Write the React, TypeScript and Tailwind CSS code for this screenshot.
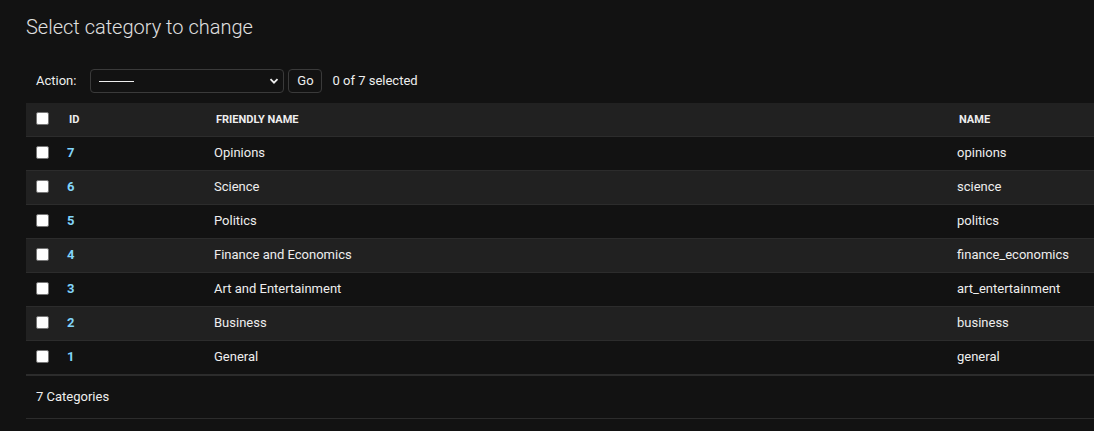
const rows = [
  { id: 7, friendly: 'Opinions', name: 'opinions' },
  { id: 6, friendly: 'Science', name: 'science' },
  { id: 5, friendly: 'Politics', name: 'politics' },
  { id: 4, friendly: 'Finance and Economics', name: 'finance_economics' },
  { id: 3, friendly: 'Art and Entertainment', name: 'art_entertainment' },
  { id: 2, friendly: 'Business', name: 'business' },
  { id: 1, friendly: 'General', name: 'general' },
]

function Checkbox() {
  return <div className="w-[13px] h-[13px] rounded-[2px] bg-white border border-[#767676]" />
}

export default function App() {
  return (
    <div className="min-h-[431px] w-[1094px] overflow-hidden bg-[#121212] text-[#eeeeee] font-['Roboto',sans-serif] pl-[26px]">
      <h1 className="pt-[14px] text-[20px] font-light leading-[26px] text-[#e0e0e0]">
        Select category to change
      </h1>

      <div className="mt-[29px] flex items-center h-[24px] pl-[10px] text-[13px]">
        <span className="text-[#eeeeee]">Action:</span>
        <div className="ml-[14px] w-[194px] h-[24px] rounded-[4px] border border-[#3a3a3a] flex items-center justify-between pl-[8px] pr-[4px]">
          <span className="block w-[35px] h-[1px] bg-[#eeeeee]" />
          <svg width="10" height="10" viewBox="0 0 10 10" className="text-[#eeeeee]">
            <path d="M1.5 3.2 L5 6.7 L8.5 3.2" fill="none" stroke="currentColor" strokeWidth="1.8" />
          </svg>
        </div>
        <div className="ml-[4px] w-[34px] h-[24px] rounded-[4px] border border-[#3a3a3a] flex items-center justify-center text-[13px]">
          Go
        </div>
        <span className="ml-[10px]">0 of 7 selected</span>
      </div>

      <div className="mt-[10px] w-[1100px] text-[13px]">
        <div className="flex items-center h-[34px] bg-[#212121] border-b border-[#2c2c2c] text-[11px] font-bold text-[#eeeeee] uppercase">
          <div className="w-[31px] pl-[10px] pb-[2px]"><Checkbox /></div>
          <div className="w-[149px] pl-[12px] pt-[2px]">ID</div>
          <div className="w-[743px] pl-[10px] pt-[2px]">Friendly name</div>
          <div className="flex-1 pl-[10px] pt-[2px]">Name</div>
        </div>
        {rows.map((r, i) => (
          <div
            key={r.id}
            className={`flex items-center h-[34px] border-b border-[#2c2c2c] ${i % 2 === 1 ? 'bg-[#212121]' : 'bg-[#121212]'}`}
          >
            <div className="w-[31px] pl-[10px] pb-[2px]"><Checkbox /></div>
            <div className="w-[149px] pl-[10px] pb-[2px] font-bold text-[#81d4fa]">{r.id}</div>
            <div className="w-[743px] pl-[8px] pb-[2px]">{r.friendly}</div>
            <div className="flex-1 pl-[8px] pb-[2px]">{r.name}</div>
          </div>
        ))}
        <div className="border-t border-[#2c2c2c] border-b h-[44px] flex items-center pl-[10px]">
          7 Categories
        </div>
      </div>
    </div>
  )
}
